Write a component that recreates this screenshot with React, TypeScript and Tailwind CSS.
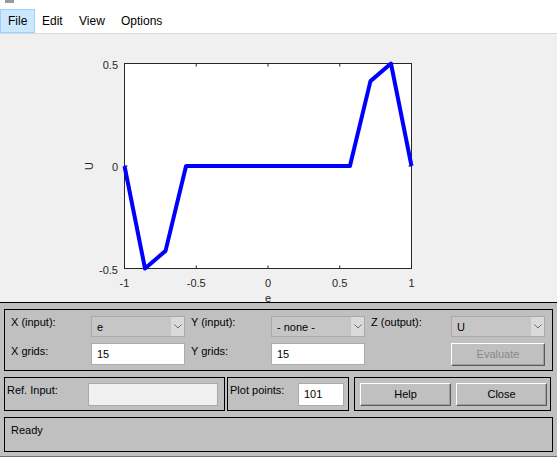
import React from 'react';

// curve of the membership / output function
const points: [number, number][] = [
  [-1, 0],
  [-0.857, -0.5],
  [-0.714, -0.414],
  [-0.571, 0],
  [0.571, 0],
  [0.714, 0.414],
  [0.857, 0.5],
  [1, 0],
];

const X0 = 124.5;
const X1 = 411.5;
const YB = 234.5;
const YT = 29.5;
const sx = (x: number) => X0 + ((x + 1) / 2) * (X1 - X0);
const sy = (y: number) => YB - (y + 0.5) * (YB - YT);

function Plot() {
  const xTicks = [-1, -0.5, 0, 0.5, 1];
  const yTicks = [0.5, 0, -0.5];
  const d = points.map(([x, y], i) => `${i ? 'L' : 'M'}${sx(x)} ${sy(y)}`).join(' ');
  return (
    <svg width={557} height={268} className="block" fontFamily="'Liberation Sans', Arial, sans-serif">
      <rect x={X0} y={YT} width={X1 - X0} height={YB - YT} fill="#ffffff" stroke="#262626" strokeWidth={1} />
      {xTicks.map((t) => (
        <g key={t}>
          <line x1={sx(t)} x2={sx(t)} y1={YT} y2={YT + 3} stroke="#262626" />
          <line x1={sx(t)} x2={sx(t)} y1={YB} y2={YB - 3} stroke="#262626" />
          <text x={sx(t)} y={252.5} fontSize={11} fill="#262626" textAnchor="middle">
            {t}
          </text>
        </g>
      ))}
      {yTicks.map((t) => (
        <g key={t}>
          <line x1={X0} x2={X0 + 3} y1={sy(t)} y2={sy(t)} stroke="#262626" />
          <line x1={X1} x2={X1 - 3} y1={sy(t)} y2={sy(t)} stroke="#262626" />
          <text x={118} y={sy(t) + 5} fontSize={11} fill="#262626" textAnchor="end">
            {t}
          </text>
        </g>
      ))}
      <path d={d} fill="none" stroke="#0000ff" strokeWidth={4} strokeLinejoin="round" />
      <text x={92.5} y={132} fontSize={11} fill="#262626" textAnchor="middle" transform="rotate(-90 92.5 132)">
        U
      </text>
      <text x={268} y={267.5} fontSize={11} fill="#262626" textAnchor="middle">
        e
      </text>
    </svg>
  );
}

function Chevron() {
  return (
    <svg width={8} height={5} viewBox="0 0 8 5" className="block">
      <path d="M0.5 0.5 L4 4 L7.5 0.5" fill="none" stroke="#6a6a6a" strokeWidth={1} />
    </svg>
  );
}

function Dropdown({ value }: { value: string }) {
  return (
    <div className="flex h-[21px] w-[94px] border border-[#a9a9a9] bg-[#c6c6c6]">
      <div className="flex-1 pl-[5px] pt-[4px] text-[11px] leading-[13px] text-black">{value}</div>
      <div className="flex w-[13px] items-center justify-center bg-[#dadada]">
        <Chevron />
      </div>
    </div>
  );
}

function Field({ value, w, bg = 'bg-white' }: { value: string; w: string; bg?: string }) {
  return (
    <div className={`flex h-[22px] items-center border border-[#ababab] pl-[5px] text-[11px] text-black ${w} ${bg}`}>
      {value}
    </div>
  );
}

function Button({ label, disabled }: { label: string; disabled?: boolean }) {
  return (
    <div
      className={`flex h-[23px] items-center justify-center border border-t-white border-l-white border-b-[#5a5a5a] border-r-[#5a5a5a] bg-[#c0c0c0] shadow-[inset_-1px_-1px_0_#a0a0a0] text-[11px] ${
        disabled ? 'text-[#8a8a8a]' : 'text-black'
      }`}
    >
      {label}
    </div>
  );
}

export default function App() {
  const menu = [
    { label: 'File', w: 'w-[35px]', active: true },
    { label: 'Edit', w: 'w-[37px]', active: false },
    { label: 'View', w: 'w-[42px]', active: false },
    { label: 'Options', w: 'w-[56px]', active: false },
  ];

  return (
    <div className="flex h-[457px] w-[557px] flex-col overflow-hidden bg-[#f0f0f0] font-['Liberation_Sans',Arial,sans-serif]">
      {/* title bar remnant */}
      <div className="relative h-[8px] bg-white">
        <div className="absolute left-[5px] top-0 h-[3px] w-[9px] bg-[#9a9a9a]" />
      </div>

      {/* menu bar */}
      <div className="flex h-[26px] border-b border-[#d9d9d9] bg-white pt-[1px]">
        {menu.map((m) => (
          <div
            key={m.label}
            className={`flex h-[24px] items-center pl-[7px] text-[12px] text-black ${m.w} ${
              m.active ? 'border border-[#99d1ff] bg-[#cce8ff] pl-[6px]' : ''
            }`}
          >
            {m.label}
          </div>
        ))}
      </div>

      {/* axes */}
      <div className="h-[268px]">
        <Plot />
      </div>

      {/* control panel */}
      <div className="flex flex-1 flex-col gap-[6px] border-t border-b border-t-black border-b-[#6e6e6e] bg-[#c0c0c0] px-[4px] pt-[6px] text-[11px] text-black">
        <div className="h-[62px] border border-black pl-[6px] pt-[6px]">
          <div className="grid grid-cols-[80px_94px_86px_94px_86px_94px] grid-rows-[21px_22px] gap-y-[6px]">
            <div className="leading-[13px]">X (input):</div>
            <Dropdown value="e" />
            <div className="pl-[6px] leading-[13px]">Y (input):</div>
            <Dropdown value="- none -" />
            <div className="pl-[6px] leading-[13px]">Z (output):</div>
            <Dropdown value="U" />

            <div className="pt-[2px] leading-[13px]">X grids:</div>
            <Field value="15" w="w-[94px]" />
            <div className="pl-[6px] pt-[2px] leading-[13px]">Y grids:</div>
            <Field value="15" w="w-[94px]" />
            <div />
            <Button label="Evaluate" disabled />
          </div>
        </div>

        <div className="flex h-[34px]">
          <div className="flex w-[221px] border border-black pl-[2px] pt-[5px]">
            <div className="w-[81px] pt-[1px] leading-[13px]">Ref. Input:</div>
            <div className="h-[23px] w-[130px] border border-[#a9a9a9] bg-[#f0f0f0]" />
          </div>
          <div className="ml-[2px] flex w-[122px] border border-black pl-[2px] pt-[5px]">
            <div className="w-[68px] pt-[1px] leading-[13px]">Plot points:</div>
            <Field value="101" w="w-[46px] h-[23px]" />
          </div>
          <div className="ml-[5px] flex w-[197px] gap-[5px] border border-black pl-[5px] pt-[5px]">
            <div className="w-[91px]">
              <Button label="Help" />
            </div>
            <div className="w-[91px]">
              <Button label="Close" />
            </div>
          </div>
        </div>

        <div className="h-[35px] border border-black pl-[6px] pt-[6px] leading-[13px]">Ready</div>
      </div>
    </div>
  );
}
